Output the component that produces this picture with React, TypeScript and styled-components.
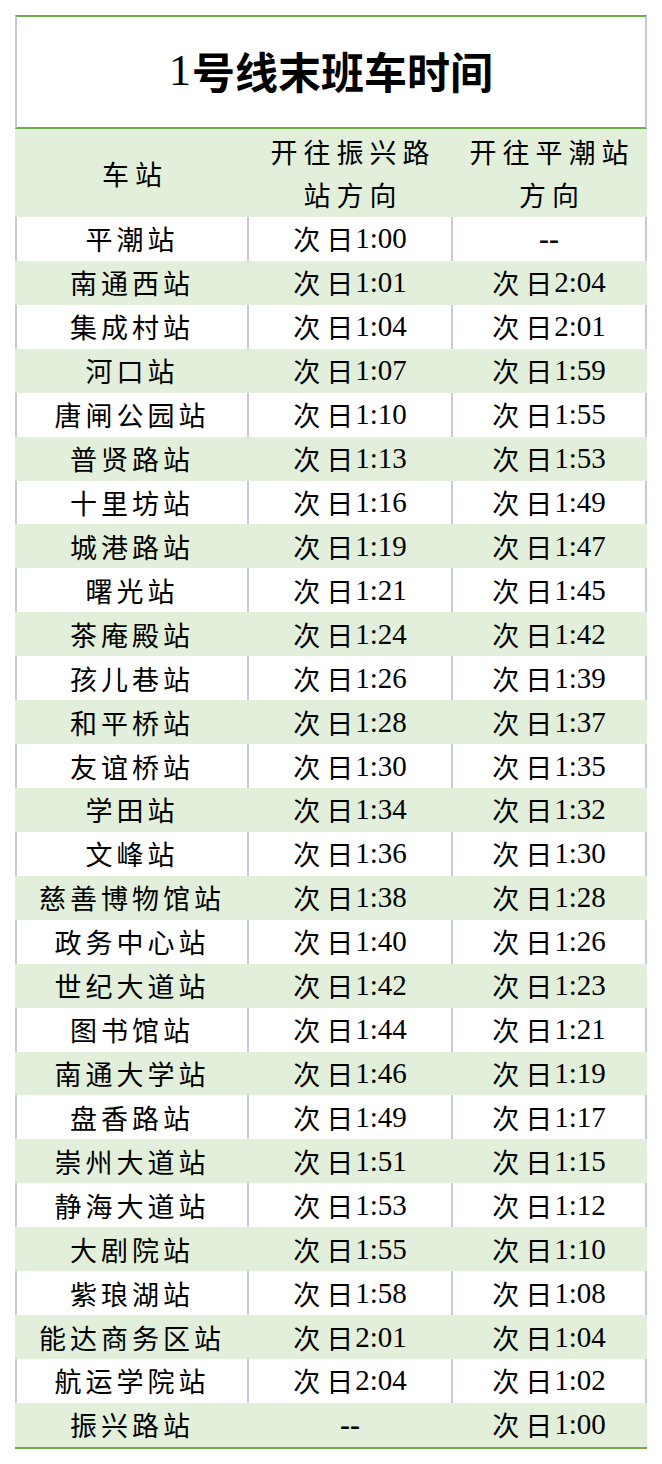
import React from 'react';
import styled, { createGlobalStyle } from 'styled-components';

const GREEN_LINE = '#70ad47';
const GREEN_FILL = '#e2efda';
const GRID = '#c3c9de';

const GlobalStyle = createGlobalStyle`
  html, body {
    margin: 0;
    padding: 0;
    background: #ffffff;
  }
  body {
    font-family: "Liberation Serif", "Noto Sans CJK SC", serif;
    color: #000;
  }
`;

const Sheet = styled.div`
  width: 632px;
  margin: 15px 0 0 15px;
`;

const TitleCell = styled.div`
  height: 106px;
  padding-bottom: 4px;
  border-top: 2px solid ${GREEN_LINE};
  border-bottom: 2px solid ${GREEN_LINE};
  border-left: 2px solid ${GRID};
  border-right: 2px solid ${GRID};
  display: flex;
  align-items: center;
  justify-content: center;
  font-size: 43px;
  font-weight: bold;
`;

const TitleNum = styled.span`
  font-weight: normal;
  font-size: 44px;
  margin-right: 1px;
`;

const Row = styled.div<{ $shaded: boolean; $height: string }>`
  display: grid;
  grid-template-columns: 232px 204px 196px;
  height: ${(p) => p.$height};
  background: ${(p) => (p.$shaded ? GREEN_FILL : '#ffffff')};
`;

const Cell = styled.div<{ $lines: boolean; $last?: boolean }>`
  display: flex;
  align-items: center;
  justify-content: center;
  text-align: center;
  border-left: 2px solid ${(p) => (p.$lines ? GRID : 'transparent')};
  border-right: ${(p) => (p.$last ? `2px solid ${p.$lines ? GRID : 'transparent'}` : 'none')};
  font-size: 29px;
  white-space: nowrap;
  overflow: hidden;
`;

const HeadCell = styled(Cell)`
  white-space: normal;
  padding: 0 10px;
`;

const HeadText = styled.span`
  font-family: "Noto Sans CJK SC", serif;
  font-size: 27px;
  letter-spacing: 6px;
  line-height: 43px;
  margin-right: -6px;
`;

const Cjk = styled.span<{ $spacing?: number }>`
  font-family: "Noto Sans CJK SC", serif;
  font-size: 27px;
  letter-spacing: ${(p) => p.$spacing ?? 4}px;
`;

const DayPrefix = styled.span`
  font-family: "Noto Sans CJK SC", serif;
  font-size: 27px;
  margin-right: 2px;

  & > span:first-child {
    margin-right: 6px;
  }
`;

const Dash = styled.span`
  font-weight: bold;
  font-size: 30px;
`;

const Table = styled.div`
  border-bottom: 2px solid ${GREEN_LINE};
`;

type Stop = [string, string | null, string | null];

const stops: Stop[] = [
  ['平潮站', '1:00', null],
  ['南通西站', '1:01', '2:04'],
  ['集成村站', '1:04', '2:01'],
  ['河口站', '1:07', '1:59'],
  ['唐闸公园站', '1:10', '1:55'],
  ['普贤路站', '1:13', '1:53'],
  ['十里坊站', '1:16', '1:49'],
  ['城港路站', '1:19', '1:47'],
  ['曙光站', '1:21', '1:45'],
  ['茶庵殿站', '1:24', '1:42'],
  ['孩儿巷站', '1:26', '1:39'],
  ['和平桥站', '1:28', '1:37'],
  ['友谊桥站', '1:30', '1:35'],
  ['学田站', '1:34', '1:32'],
  ['文峰站', '1:36', '1:30'],
  ['慈善博物馆站', '1:38', '1:28'],
  ['政务中心站', '1:40', '1:26'],
  ['世纪大道站', '1:42', '1:23'],
  ['图书馆站', '1:44', '1:21'],
  ['南通大学站', '1:46', '1:19'],
  ['盘香路站', '1:49', '1:17'],
  ['崇州大道站', '1:51', '1:15'],
  ['静海大道站', '1:53', '1:12'],
  ['大剧院站', '1:55', '1:10'],
  ['紫琅湖站', '1:58', '1:08'],
  ['能达商务区站', '2:01', '1:04'],
  ['航运学院站', '2:04', '1:02'],
  ['振兴路站', null, '1:00'],
];

const Time = ({ value }: { value: string | null }) =>
  value ? (
    <>
      <DayPrefix>
        <span>次</span>
        <span>日</span>
      </DayPrefix>
      <span>{value}</span>
    </>
  ) : (
    <Dash>--</Dash>
  );

export default function App() {
  const rowHeight = `${1230 / stops.length}px`;
  return (
    <>
      <GlobalStyle />
      <Sheet>
        <TitleCell>
          <TitleNum>1</TitleNum>号线末班车时间
        </TitleCell>
        <Table>
          <Row $shaded $height="88px">
            <HeadCell $lines={false}>
              <HeadText>车站</HeadText>
            </HeadCell>
            <HeadCell $lines={false}>
              <HeadText>开往振兴路站方向</HeadText>
            </HeadCell>
            <HeadCell $lines={false} $last>
              <HeadText>开往平潮站方向</HeadText>
            </HeadCell>
          </Row>
          {stops.map(([name, toZhenxing, toPingchao], i) => {
            const shaded = i % 2 === 1;
            return (
              <Row key={name} $shaded={shaded} $height={rowHeight}>
                <Cell $lines={!shaded}>
                  <Cjk>{name}</Cjk>
                </Cell>
                <Cell $lines={!shaded}>
                  <Time value={toZhenxing} />
                </Cell>
                <Cell $lines={!shaded} $last>
                  <Time value={toPingchao} />
                </Cell>
              </Row>
            );
          })}
        </Table>
      </Sheet>
    </>
  );
}
